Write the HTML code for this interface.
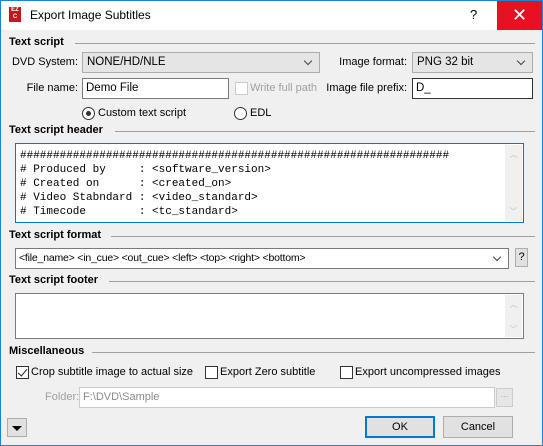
<!DOCTYPE html>
<html><head><style>
*{box-sizing:border-box;margin:0;padding:0}
body{width:543px;height:446px;background:#f0f0f0;font-family:"Liberation Sans",sans-serif;font-size:11px;color:#000;position:relative;overflow:hidden;white-space:nowrap}
.a{position:absolute}
.win{left:0;top:0;width:543px;height:446px;border:1px solid #1883d7}
.tb{left:1px;top:1px;width:541px;height:29px;background:#fff}
.h{font-weight:bold;font-size:11px}
.line{height:1px;background:#a0a0a0}
.box{background:#fff;border:1px solid #7a7a7a}
.combo{background:#e5e5e5;border:1px solid #acacac}
.lbl{text-align:right}
.chev{width:6px;height:6px;border-right:1px solid #444;border-bottom:1px solid #444;transform:rotate(45deg)}
.cb{width:13px;height:13px;border:1px solid #333;background:#fff}
.rd{width:13px;height:13px;border:1px solid #333;border-radius:50%;background:#fff}
.mono{font-family:"Liberation Mono",monospace;font-size:11px;line-height:14px;white-space:pre}
.btn{background:#e1e1e1;border:1px solid #adadad;text-align:center}
</style></head><body>
<div class="a win"></div>
<div class="a tb"></div>
<div class="a" style="left:9px;top:7px;width:12px;height:15px;background:#c4161c;color:#fff;font-size:6px;font-weight:bold;line-height:7px;text-align:center">EZ<br>C</div>
<div class="a" style="left:30px;top:8px;font-size:12px">Export Image Subtitles</div>
<div class="a" style="left:470px;top:7px;font-size:13px">?</div>
<div class="a" style="left:497px;top:1px;width:45px;height:29px;background:#e81123;color:#fff;font-size:18px;text-align:center;line-height:28px">✕</div>

<div class="a h" style="left:9px;top:36px">Text script</div>
<div class="a line" style="left:75px;top:43px;width:460px"></div>
<div class="a lbl" style="left:0px;top:56px;width:78px">DVD System:</div>
<div class="a combo" style="left:82px;top:52px;width:238px;height:21px"><span class="a" style="left:4px;top:3px;font-size:11.5px">NONE/HD/NLE</span><div class="a chev" style="right:8px;top:5px"></div></div>
<div class="a lbl" style="left:310px;top:56px;width:97px">Image format:</div>
<div class="a combo" style="left:412px;top:52px;width:121px;height:21px"><span class="a" style="left:4px;top:3px;font-size:11.5px">PNG 32 bit</span><div class="a chev" style="right:8px;top:5px"></div></div>
<div class="a lbl" style="left:0px;top:82px;width:78px">File name:</div>
<div class="a box" style="left:82px;top:78px;width:147px;height:21px"><span class="a" style="left:3px;top:3px;font-size:11.5px">Demo File</span></div>
<div class="a cb" style="left:235px;top:82px;border-color:#ccc"></div>
<div class="a" style="left:250px;top:82px;color:#a0a0a0">Write full path</div>
<div class="a lbl" style="left:310px;top:82px;width:97px">Image file prefix:</div>
<div class="a box" style="left:412px;top:78px;width:121px;height:21px;border-color:#333"><span class="a" style="left:3px;top:3px;font-size:11.5px">D_</span></div>
<div class="a rd" style="left:82px;top:107px"><div class="a" style="left:3px;top:3px;width:5px;height:5px;border-radius:50%;background:#333"></div></div>
<div class="a" style="left:98px;top:107px">Custom text script</div>
<div class="a rd" style="left:234px;top:107px"></div>
<div class="a" style="left:250px;top:107px">EDL</div>

<div class="a h" style="left:9px;top:124px">Text script header</div>
<div class="a line" style="left:115px;top:131px;width:420px"></div>
<div class="a box" style="left:15px;top:143px;width:509px;height:80px;border-color:#0078d7">
<div class="a mono" style="left:4px;top:5px">#################################################################
# Produced by     : &lt;software_version&gt;
# Created on      : &lt;created_on&gt;
# Video Stabndard : &lt;video_standard&gt;
# Timecode        : &lt;tc_standard&gt;</div>
<div class="a" style="right:1px;top:1px;width:17px;height:76px;background:#f0f0f0;color:#bbb;font-size:8px;text-align:center"><div style="margin-top:4px">︿</div><div style="margin-top:46px">﹀</div></div>
</div>

<div class="a h" style="left:9px;top:229px">Text script format</div>
<div class="a line" style="left:111px;top:236px;width:424px"></div>
<div class="a box" style="left:15px;top:248px;width:494px;height:21px"><span class="a" style="left:3px;top:3px;font-size:10.5px;letter-spacing:-0.2px">&lt;file_name&gt; &lt;in_cue&gt; &lt;out_cue&gt; &lt;left&gt; &lt;top&gt; &lt;right&gt; &lt;bottom&gt;</span><div class="a chev" style="right:8px;top:5px"></div></div>
<div class="a btn" style="left:515px;top:248px;width:13px;height:19px;font-size:11px;line-height:17px">?</div>

<div class="a h" style="left:9px;top:274px">Text script footer</div>
<div class="a line" style="left:109px;top:281px;width:426px"></div>
<div class="a box" style="left:15px;top:293px;width:509px;height:46px">
<div class="a" style="right:1px;top:1px;width:17px;height:42px;background:#f0f0f0;color:#bbb;font-size:8px;text-align:center"><div style="margin-top:4px">︿</div><div style="margin-top:14px">﹀</div></div></div>

<div class="a h" style="left:9px;top:345px">Miscellaneous</div>
<div class="a line" style="left:92px;top:352px;width:443px"></div>
<div class="a cb" style="left:16px;top:366px"><div class="a" style="left:3px;top:0px;width:5px;height:9px;border-right:1.5px solid #222;border-bottom:1.5px solid #222;transform:rotate(40deg)"></div></div>
<div class="a" style="left:31px;top:366px">Crop subtitle image to actual size</div>
<div class="a cb" style="left:205px;top:366px"></div>
<div class="a" style="left:220px;top:366px">Export Zero subtitle</div>
<div class="a cb" style="left:340px;top:366px"></div>
<div class="a" style="left:355px;top:366px">Export uncompressed images</div>
<div class="a" style="left:45px;top:391px;color:#a0a0a0">Folder:</div>
<div class="a box" style="left:79px;top:387px;width:416px;height:21px;border-color:#ccc"><span class="a" style="left:3px;top:3px;color:#8a8a8a">F:\DVD\Sample</span></div>
<div class="a btn" style="left:496px;top:388px;width:17px;height:19px;border-color:#ccc;background:#e6e6e6;color:#aaa;font-size:9px">...</div>

<div class="a btn" style="left:7px;top:418px;width:20px;height:19px"><div class="a" style="left:4px;top:7px;border-left:5px solid transparent;border-right:5px solid transparent;border-top:5px solid #000"></div></div>
<div class="a btn" style="left:365px;top:416px;width:70px;height:22px;border:2px solid #0078d7;line-height:18px">OK</div>
<div class="a btn" style="left:443px;top:416px;width:70px;height:22px;line-height:20px">Cancel</div>
</body></html>
